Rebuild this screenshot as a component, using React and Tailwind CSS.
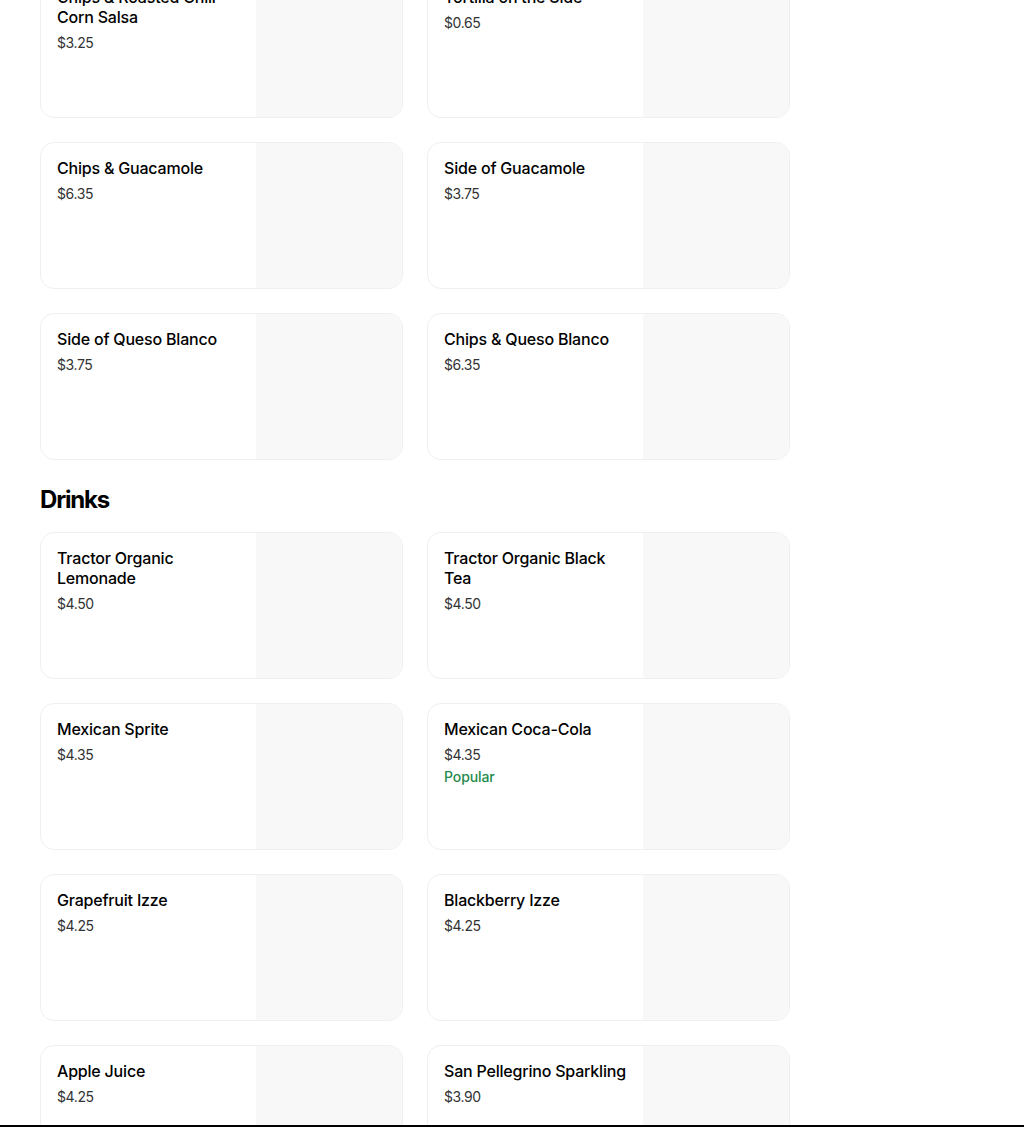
import React from "react";

const sides = [
  { name: "Chips & Roasted Chili Corn Salsa", price: "$3.25" },
  { name: "Tortilla on the Side", price: "$0.65" },
  { name: "Chips & Guacamole", price: "$6.35" },
  { name: "Side of Guacamole", price: "$3.75" },
  { name: "Side of Queso Blanco", price: "$3.75" },
  { name: "Chips & Queso Blanco", price: "$6.35" },
];

const drinks = [
  { name: "Tractor Organic Lemonade", price: "$4.50" },
  { name: "Tractor Organic Black Tea", price: "$4.50" },
  { name: "Mexican Sprite", price: "$4.35" },
  { name: "Mexican Coca-Cola", price: "$4.35", popular: true },
  { name: "Grapefruit Izze", price: "$4.25" },
  { name: "Blackberry Izze", price: "$4.25" },
  { name: "Apple Juice", price: "$4.25" },
  { name: "San Pellegrino Sparkling", price: "$3.90" },
];

const ItemCard = ({ item }) => (
  <li className="flex h-[147px] overflow-hidden rounded-[14px] border border-[#efefef] bg-white">
    <div className="flex-1 min-w-0 pl-4 pr-2 pt-[15px]">
      <h3 className="text-base font-medium leading-5 tracking-[-0.2px] text-black">{item.name}</h3>
      <div className="mt-[6px] text-sm leading-5 tracking-[-0.4px] text-[#333333]">{item.price}</div>
      {item.popular && (
        <div className="mt-[2px] text-sm font-medium leading-5 tracking-[-0.1px] text-[#1f8a4c]">Popular</div>
      )}
    </div>
    <div className="w-[146px] shrink-0 bg-[#f8f8f8]" />
  </li>
);

const App = () => {
  return (
    <div className="h-[1127px] overflow-hidden bg-white font-['Inter',sans-serif]">
      <div className="w-[750px] ml-10 mt-[-29px]">
        <ul className="grid grid-cols-2 gap-6">
          {sides.map(item => <ItemCard key={item.name} item={item} />)}
        </ul>
        <h2 className="mt-6 mb-4 text-2xl font-bold leading-8 tracking-[-1.2px] text-black">Drinks</h2>
        <ul className="grid grid-cols-2 gap-6">
          {drinks.map(item => <ItemCard key={item.name} item={item} />)}
        </ul>
      </div>
      <div className="fixed bottom-0 left-0 right-0 h-[2px] bg-black" />
    </div>
  );
};

export default App;
